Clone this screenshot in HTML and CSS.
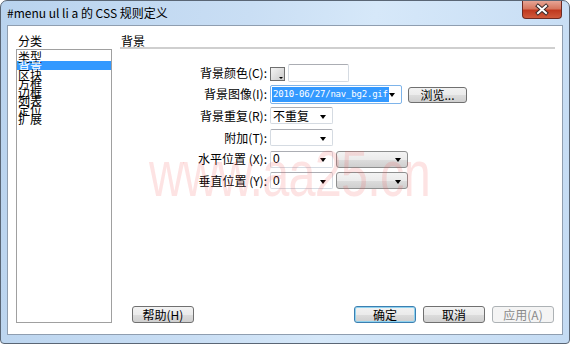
FILE: index.html
```html
<!DOCTYPE html>
<html lang="zh">
<head>
<meta charset="utf-8">
<title>CSS 规则定义</title>
<link rel="stylesheet" href="styles.css">
</head>
<body>
<div class="window">
  <div class="titlebar">
    <span class="title">#menu ul li a 的 CSS 规则定义</span>
    <span class="close">
      <svg width="38" height="16" viewBox="0 0 38 16">
        <path d="M15 4 L23 11 M23 4 L15 11" stroke="#3b2a2a" stroke-width="4" stroke-linecap="square" fill="none"/>
        <path d="M15 4 L23 11 M23 4 L15 11" stroke="#ffffff" stroke-width="2" stroke-linecap="square" fill="none"/>
      </svg>
    </span>
  </div>
  <div class="client">
    <div class="leftcol">
      <div class="caption">分类</div>
      <ul class="listbox">
        <li>类型</li>
        <li class="sel">背景</li>
        <li>区块</li>
        <li>方框</li>
        <li>边框</li>
        <li>列表</li>
        <li>定位</li>
        <li>扩展</li>
      </ul>
    </div>
    <div class="rightcol">
      <div class="header">背景</div>
      <div class="form">
        <label class="lbl">背景颜色(C):</label>
        <div class="ctrls">
          <span class="swatch"><span class="swarrow"></span></span>
          <span class="input w61"></span>
        </div>

        <label class="lbl">背景图像(I):</label>
        <div class="ctrls">
          <span class="combo w132 tall"><span class="seltext">2010-06/27/nav_bg2.gif</span><span class="arrow"></span></span>
          <span class="btn browse">浏览...</span>
        </div>

        <label class="lbl">背景重复(R):</label>
        <div class="ctrls">
          <span class="combo w63"><span class="val">不重复</span><span class="arrow"></span></span>
        </div>

        <label class="lbl">附加(T):</label>
        <div class="ctrls">
          <span class="combo w63"><span class="val"></span><span class="arrow"></span></span>
        </div>

        <label class="lbl">水平位置 (X):</label>
        <div class="ctrls">
          <span class="combo w63"><span class="val num">0</span><span class="arrow"></span></span>
          <span class="dd"><span class="arrow"></span></span>
        </div>

        <label class="lbl">垂直位置 (Y):</label>
        <div class="ctrls">
          <span class="combo w63"><span class="val num">0</span><span class="arrow"></span></span>
          <span class="dd"><span class="arrow"></span></span>
        </div>
      </div>
      <div class="buttons">
        <span class="btn help">帮助(H)</span>
        <span class="spacer"></span>
        <span class="btn default">确定</span>
        <span class="btn">取消</span>
        <span class="btn disabled">应用(A)</span>
      </div>
    </div>
  </div>
  <div class="watermark">www.aa25.cn</div>
</div>
</body>
</html>
```

FILE: styles.css
```css
* { box-sizing: border-box; }
html, body { margin: 0; padding: 0; background: #ffffff; }
body { font-family: "Noto Sans CJK SC", "Liberation Sans", sans-serif; font-size: 12px; color: #000; }

.window {
  position: relative;
  width: 570px;
  height: 344px;
  border: 1px solid #5a6675;
  border-radius: 7px 7px 4px 4px;
  background: linear-gradient(100deg, #b9d3ee 0%, #c9def4 40%, #d6e8f9 60%, #c4dbf3 100%);
  display: flex;
  flex-direction: column;
  padding: 0 6px 8px 6px;
  overflow: hidden;
}

.titlebar {
  height: 24px;
  display: flex;
  align-items: center;
  position: relative;
}
.title {
  font-family: "Noto Sans CJK SC", "Liberation Sans", sans-serif;
  font-size: 12px;
  color: #000;
  margin-top: -1px;
}
.close {
  position: absolute;
  right: 1px;
  top: 0;
  width: 40px;
  height: 18px;
  border: 1px solid #6d2a22;
  border-top: none;
  border-radius: 0 0 4px 4px;
  background: linear-gradient(#e7a595 0%, #d6775f 45%, #c0391f 55%, #d05a3c 100%);
  display: flex;
  align-items: center;
  justify-content: center;
}
.close svg { display: block; }

.client {
  flex: 1;
  border: 1px solid #8f9eb0;
  background: #ffffff;
  display: flex;
  padding: 8px 7px 11px 8px;
}

.leftcol {
  width: 96px;
  display: flex;
  flex-direction: column;
}
.caption {
  height: 14px;
  line-height: 14px;
  padding-left: 2px;
  margin-bottom: 1px;
}
.listbox {
  flex: 1;
  list-style: none;
  margin: 0;
  padding: 2px 0 0 0;
  border: 1px solid #a0a0a0;
  overflow: hidden;
}
.listbox li {
  height: 8.7px;
  line-height: 9px;
  padding-left: 1px;
  font-size: 12px;
  white-space: nowrap;
}
.listbox li.sel {
  background: #3399ff;
  color: #ffffff;
  height: 9.5px;
}

.rightcol {
  flex: 1;
  margin-left: 8px;
  display: flex;
  flex-direction: column;
}
.header {
  height: 15px;
  line-height: 13px;
  padding-left: 1px;
  border-bottom: 2px solid #cfcfcf;
}

.form {
  margin-top: 13px;
  display: grid;
  grid-template-columns: 147px 1fr;
  grid-auto-rows: 21.6px;
  column-gap: 3px;
  align-items: center;
}
.lbl {
  text-align: right;
  white-space: nowrap;
  line-height: 14px;
}
.ctrls {
  display: flex;
  align-items: center;
  height: 100%;
}

.input, .combo {
  display: flex;
  align-items: center;
  height: 17px;
  border: 1px solid #d5dbe2;
  border-top-color: #abadb3;
  border-radius: 2px;
  background: #fff;
  position: relative;
}
.w61 { width: 61px; margin-left: 3px; height: 18px; }
.w63 { width: 63px; }
.w132 { width: 132px; }
.tall { height: 19px; border-color: #7eb4ea; }

.swatch {
  width: 15px;
  height: 14px;
  border: 1px solid #6f6f6f;
  background: linear-gradient(135deg, #f4f4f4, #c9c9c9);
  position: relative;
  margin-top: 3px;
}
.swarrow {
  position: absolute;
  right: 1px;
  bottom: 1px;
  width: 0; height: 0;
  border-left: 2px solid transparent;
  border-right: 2px solid transparent;
  border-top: 2px solid #000;
}

.seltext {
  margin-left: 1px;
  height: 15px;
  line-height: 15px;
  background: #3399ff;
  color: #fff;
  font-family: "DejaVu Sans Mono", "Liberation Mono", monospace;
  font-size: 9px;
  letter-spacing: -0.2px;
  padding: 0 1px;
  white-space: nowrap;
}
.val {
  padding-left: 2px;
  line-height: 14px;
}
.val.num { font-family: "Liberation Sans", sans-serif; font-size: 12px; }

.arrow {
  position: absolute;
  right: 6px;
  top: 50%;
  margin-top: -1px;
  width: 0; height: 0;
  border-left: 3.5px solid transparent;
  border-right: 3.5px solid transparent;
  border-top: 4px solid #000;
}

.dd {
  width: 72px;
  height: 17px;
  margin-left: 3px;
  border: 1px solid #8e8f8f;
  border-radius: 3px;
  background: linear-gradient(#f3f3f3 0%, #ebebeb 50%, #dddddd 51%, #cfcfcf 100%);
  position: relative;
}

.btn {
  display: inline-flex;
  align-items: center;
  justify-content: center;
  width: 62px;
  height: 17px;
  border: 1px solid #707070;
  border-radius: 3px;
  background: linear-gradient(#f2f2f2 0%, #ebebeb 50%, #dddddd 51%, #cfcfcf 100%);
  font-size: 12px;
  line-height: 14px;
  white-space: nowrap;
}
.browse {
  width: 59px;
  height: 16px;
  margin-left: 6px;
  margin-top: 1px;
}

.buttons {
  margin-top: auto;
  display: flex;
  gap: 7px;
  padding-left: 12px;
  padding-right: 1px;
}
.spacer { flex: 1; }
.btn.default {
  border-color: #3c7fb1;
  box-shadow: inset 0 0 0 1px #8fd2ef;
}
.btn.disabled {
  border-color: #adb2b5;
  background: #f4f4f4;
  color: #8a8a8a;
}

.watermark {
  position: absolute;
  left: 148px;
  top: 136px;
  font-family: "Liberation Sans", sans-serif;
  font-size: 64px;
  color: rgba(240, 80, 80, 0.16);
  letter-spacing: -1px;
  transform: scaleX(0.76);
  transform-origin: left top;
  pointer-events: none;
  white-space: nowrap;
}
```
